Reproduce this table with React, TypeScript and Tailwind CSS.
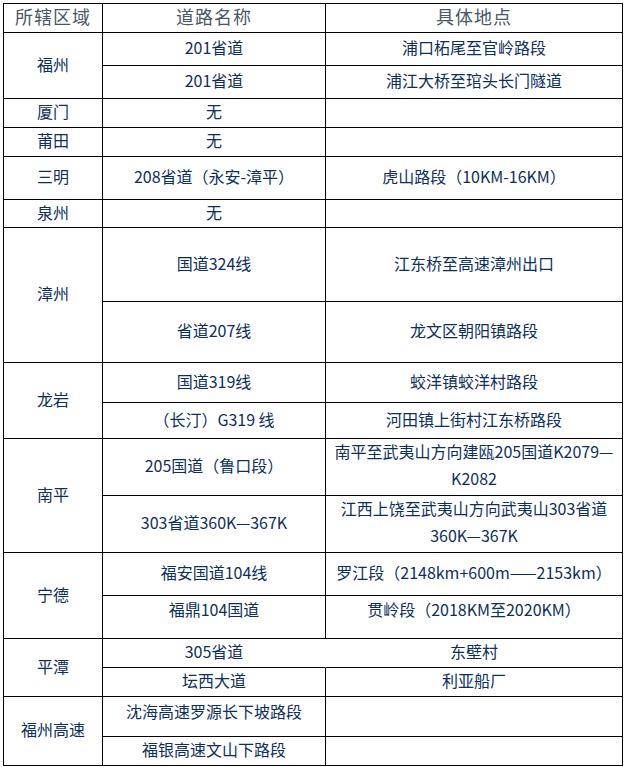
import React from "react";

type CellProps = {
  children?: React.ReactNode;
  span?: string;
  extra?: string;
  noRight?: boolean;
};

function Cell({ children, span = "", extra = "pb-[4px]", noRight = false }: CellProps) {
  return (
    <div
      className={`flex items-center justify-center text-center border-b border-black ${
        noRight ? "border-r border-r-transparent" : "border-r"
      } ${span} ${extra}`}
    >
      {children}
    </div>
  );
}

export default function App() {
  return (
    <div className="w-[625px] h-[767px] bg-white pt-[3px] pl-[3px] font-['Noto_Sans_CJK_SC',sans-serif] text-[16px] leading-[20px] text-[#0d2f5e]">
      <div className="grid w-fit grid-cols-[99px_223px_297px] grid-rows-[29px_33px_33px_29px_29px_43px_28px_74px_61px_40px_36px_57px_57px_43px_43px_29px_29px_40px_29px] border-l border-t border-black">
        {/* header */}
        <Cell extra="pb-[4px] text-[18px] tracking-[1px] text-[#4a5668]">所辖区域</Cell>
        <Cell extra="pb-[4px] text-[18px] tracking-[1px] text-[#4a5668]">道路名称</Cell>
        <Cell extra="pb-[4px] text-[18px] tracking-[1px] text-[#4a5668]">具体地点</Cell>

        {/* 福州 */}
        <Cell span="row-span-2">福州</Cell>
        <Cell>201省道</Cell>
        <Cell>浦口柘尾至官岭路段</Cell>
        <Cell>201省道</Cell>
        <Cell>浦江大桥至琯头长门隧道</Cell>

        {/* 厦门 */}
        <Cell>厦门</Cell>
        <Cell>无</Cell>
        <Cell />

        {/* 莆田 */}
        <Cell>莆田</Cell>
        <Cell>无</Cell>
        <Cell />

        {/* 三明 */}
        <Cell>三明</Cell>
        <Cell>208省道（永安-漳平）</Cell>
        <Cell>虎山路段（10KM-16KM）</Cell>

        {/* 泉州 */}
        <Cell>泉州</Cell>
        <Cell>无</Cell>
        <Cell />

        {/* 漳州 */}
        <Cell span="row-span-2">漳州</Cell>
        <Cell>国道324线</Cell>
        <Cell>江东桥至高速漳州出口</Cell>
        <Cell>省道207线</Cell>
        <Cell>龙文区朝阳镇路段</Cell>

        {/* 龙岩 */}
        <Cell span="row-span-2">龙岩</Cell>
        <Cell>国道319线</Cell>
        <Cell>蛟洋镇蛟洋村路段</Cell>
        <Cell>（长汀）G319 线</Cell>
        <Cell>河田镇上街村江东桥路段</Cell>

        {/* 南平 */}
        <Cell span="row-span-2">南平</Cell>
        <Cell>205国道（鲁口段）</Cell>
        <Cell extra="pb-[4px] leading-[27px]">
          <span>
            南平至武夷山方向建瓯205国道K2079—
            <br />
            K2082
          </span>
        </Cell>
        <Cell>303省道360K—367K</Cell>
        <Cell extra="pb-[4px] leading-[27px]">
          <span>
            江西上饶至武夷山方向武夷山303省道
            <br />
            360K—367K
          </span>
        </Cell>

        {/* 宁德 */}
        <Cell span="row-span-2">宁德</Cell>
        <Cell>福安国道104线</Cell>
        <Cell>罗江段（2148km+600m——2153km）</Cell>
        <Cell extra="pb-[16px]">福鼎104国道</Cell>
        <Cell extra="pb-[16px]">贯岭段（2018KM至2020KM）</Cell>

        {/* 平潭 */}
        <Cell span="row-span-2">平潭</Cell>
        <Cell noRight>305省道</Cell>
        <Cell>东壁村</Cell>
        <Cell>坛西大道</Cell>
        <Cell>利亚船厂</Cell>

        {/* 福州高速 */}
        <Cell span="row-span-2">福州高速</Cell>
        <Cell extra="pb-[12px]">沈海高速罗源长下坡路段</Cell>
        <Cell />
        <Cell>福银高速文山下路段</Cell>
        <Cell />
      </div>
    </div>
  );
}
